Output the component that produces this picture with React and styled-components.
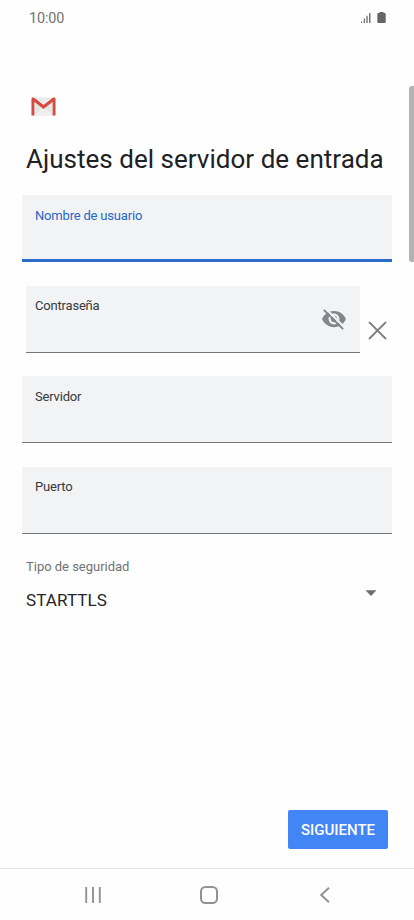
import React, { useState } from 'react';
import styled, { createGlobalStyle } from 'styled-components';

const GlobalStyle = createGlobalStyle`
  * {
    box-sizing: border-box;
  }
  body {
    margin: 0;
    background: #fefefe;
    font-family: Roboto, sans-serif;
  }
`;
const Screen = styled.div`
  position: relative;
  display: flex;
  flex-direction: column;
  width: 414px;
  height: 920px;
  overflow: hidden;
  background: #fefefe;
`;
const StatusBar = styled.header`
  display: flex;
  align-items: center;
  justify-content: space-between;
  height: 36px;
  padding: 0 28px 0 29px;
  color: #737373;
  font-size: 14.4px;
  letter-spacing: -0.15px;
`;
const StatusIcons = styled.div`
  display: flex;
  gap: 5px;
`;
const Content = styled.main`
  flex: 1;
  padding: 60.5px 22px 0;
`;
const Logo = styled.svg`
  display: block;
  margin-left: 9px;
`;
const Title = styled.h1`
  margin: 27.5px 0 20px 4px;
  color: #202124;
  font-size: 26px;
  font-weight: 400;
  line-height: 32px;
  letter-spacing: 0.02px;
  white-space: nowrap;
`;
const FieldRow = styled.div`
  display: flex;
  align-items: center;
  height: 67px;
  margin-bottom: 23.5px;
  padding-left: ${({ $inset }) => ($inset ? '4px' : '0')};
`;
const FieldBox = styled.label`
  display: flex;
  flex: 1;
  align-items: center;
  height: 67px;
  padding-left: ${({ $inset }) => ($inset ? '9px' : '13px')};
  padding-right: 13px;
  background: #f1f3f4;
  border-bottom: ${({ $active }) =>
    $active ? '3px solid #2d6bc8' : '1px solid #747678'};
`;
const FieldText = styled.span`
  display: flex;
  flex: 1;
  flex-direction: column;
  height: 100%;
  padding-top: 12.5px;
`;
const Label = styled.span`
  color: ${({ $active }) => ($active ? '#2767c6' : '#37393b')};
  font-size: 13px;
  line-height: 16px;
  letter-spacing: -0.19px;
`;
const Input = styled.input`
  width: 100%;
  padding: 0;
  background: none;
  border: none;
  outline: none;
  font: 16px Roboto, sans-serif;
`;
const IconButton = styled.button`
  display: flex;
  padding: 0;
  background: none;
  border: none;
`;
const ClearButton = styled(IconButton)`
  margin: 22px 5px 0 8px;
`;
const Select = styled.div`
  display: flex;
  align-items: center;
  justify-content: space-between;
  padding: 0 15px 0 4px;
`;
const SelectLabel = styled.div`
  margin-top: 0.6px;
  color: #717375;
  font-size: 13px;
  line-height: 18px;
  letter-spacing: -0.02px;
`;
const SelectValue = styled.div`
  margin-top: 14px;
  color: #242526;
  font-size: 17px;
  line-height: 20px;
  letter-spacing: 0.1px;
`;
const Caret = styled.svg`
  margin-top: 19px;
`;
const Actions = styled.footer`
  display: flex;
  justify-content: flex-end;
  padding: 0 26px 19px;
`;
const NextButton = styled.button`
  width: 100px;
  height: 39px;
  padding: 1px 0 0;
  background: #4285f4;
  border: none;
  border-radius: 2px;
  color: #ffffff;
  font: 500 15px Roboto, sans-serif;
`;
const NavBar = styled.nav`
  display: flex;
  gap: 98px;
  align-items: center;
  height: 52px;
  padding-left: 84px;
  border-top: 1px solid #e4e4e4;
`;
const BackButton = styled(IconButton)`
  margin-left: 3px;
`;
const ScrollThumb = styled.div`
  position: absolute;
  top: 86px;
  right: 0;
  width: 5px;
  height: 176px;
  background: #b2b2b2;
  border-radius: 3px 0 0 3px;
`;

const GmailLogo = () => (
  <Logo width="25" height="19" viewBox="0 0 25 19">
    <rect x="0.5" y="0.5" width="24" height="18" rx="1.5" fill="#e6e6e6" />
    <path d="M3 18.500L12.500 8.500L22 18.500z" fill="#f0f0f0" />
    <path d="M3 18L10 11.300M22 18L15 11.300" stroke="#d8d8d8" strokeWidth="0.600" />
    <path d="M2.500 1.500h20l-10 8z" fill="#ececec" />
    <path
      d="M0.500 18.500V2C0.500 .9 1.100 .5 2 .5c.6 0 1 .2 1.500 .6l9 6.900 9-6.900c.5-.4 .9-.6 1.500-.6 .9 0 1.500 .4 1.500 1.500v16.500h-2.800V4.800L12.500 12 3.300 4.800V18.500z"
      fill="#d54b3f"
    />
  </Logo>
);

const EyeOff = () => (
  <svg width="26" height="26" viewBox="0 0 24 24">
    <path
      fill="#80868b"
      fillRule="evenodd"
      d="M12 4.500C7 4.500 2.730 7.610 1 12c1.730 4.390 6 7.500 11 7.500s9.270-3.110 11-7.500c-1.730-4.390-6-7.500-11-7.500zM12 17c-2.760 0-5-2.240-5-5s2.240-5 5-5 5 2.240 5 5-2.240 5-5 5zm0-8c-1.660 0-3 1.340-3 3s1.340 3 3 3 3-1.340 3-3-1.340-3-3-3z"
    />
    <path d="M4.500 2.500L22 20" stroke="#f1f3f4" strokeWidth="1.900" />
    <path d="M2.600 3.600L20.400 21.400" stroke="#80868b" strokeWidth="1.800" />
  </svg>
);

const Field = ({ label, name, type = 'text', active, inset, toggle, clearable }) => {
  const [value, setValue] = useState('');
  const [hidden, setHidden] = useState(type === 'password');

  return (
    <FieldRow $inset={inset}>
      <FieldBox $active={active} $inset={inset}>
        <FieldText>
          <Label $active={active}>{label}</Label>
          <Input
            type={hidden ? 'password' : 'text'}
            name={name}
            value={value}
            autoComplete="off"
            onChange={({ target }) => setValue(target.value)}
          />
        </FieldText>
        {toggle && (
          <IconButton type="button" onClick={() => setHidden(!hidden)}>
            <EyeOff />
          </IconButton>
        )}
      </FieldBox>
      {clearable && (
        <ClearButton type="button" onClick={() => setValue('')}>
          <svg width="19" height="19" viewBox="0 0 19 19">
            <path
              d="M1.500 1.500l16 16M17.500 1.500l-16 16"
              stroke="#808080"
              strokeWidth="1.800"
              strokeLinecap="round"
            />
          </svg>
        </ClearButton>
      )}
    </FieldRow>
  );
};

const App = () => (
  <Screen>
    <GlobalStyle />
    <StatusBar>
      <span>10:00</span>
      <StatusIcons>
        <svg width="12" height="12" viewBox="0 0 12 12" fill="#777777">
          <rect x="1" y="9.500" width="1.300" height="1.500" />
          <rect x="3.700" y="6.500" width="1.300" height="4.500" />
          <rect x="6.300" y="3.800" width="1.400" height="7.200" />
          <rect x="9" y="1" width="1.500" height="10" />
        </svg>
        <svg width="9" height="12" viewBox="0 0 9 12" fill="#666666">
          <path d="M2.500 0h4v1h1.300q.9 0 .9 .9v8.200q0 .9-.9 .9H1.200q-.9 0-.9-.9V1.900q0-.9 .9-.9h1.300z" />
        </svg>
      </StatusIcons>
    </StatusBar>
    <Content>
      <GmailLogo />
      <Title>Ajustes del servidor de entrada</Title>
      <Field label="Nombre de usuario" name="user" active />
      <Field
        label="Contraseña"
        name="password"
        type="password"
        inset
        toggle
        clearable
      />
      <Field label="Servidor" name="server" />
      <Field label="Puerto" name="port" />
      <Select>
        <div>
          <SelectLabel>Tipo de seguridad</SelectLabel>
          <SelectValue>STARTTLS</SelectValue>
        </div>
        <Caret width="12" height="6" viewBox="0 0 12 6">
          <path d="M.5 .2h11L6 5.900z" fill="#6e6e6e" />
        </Caret>
      </Select>
    </Content>
    <Actions>
      <NextButton type="button">SIGUIENTE</NextButton>
    </Actions>
    <NavBar>
      <IconButton type="button">
        <svg width="18" height="18" viewBox="0 0 18 18">
          <path d="M2.200 1v16M9 1v16M15.800 1v16" stroke="#929292" strokeWidth="1.900" />
        </svg>
      </IconButton>
      <IconButton type="button">
        <svg width="18" height="18" viewBox="0 0 18 18">
          <rect
            x="1"
            y="1"
            width="16"
            height="16"
            rx="4.500"
            fill="none"
            stroke="#929292"
            strokeWidth="2"
          />
        </svg>
      </IconButton>
      <BackButton type="button">
        <svg width="12" height="18" viewBox="0 0 12 18">
          <path d="M10 1.700L2.200 9l7.800 7.300" fill="none" stroke="#929292" strokeWidth="2" />
        </svg>
      </BackButton>
    </NavBar>
    <ScrollThumb />
  </Screen>
);

export default App;
